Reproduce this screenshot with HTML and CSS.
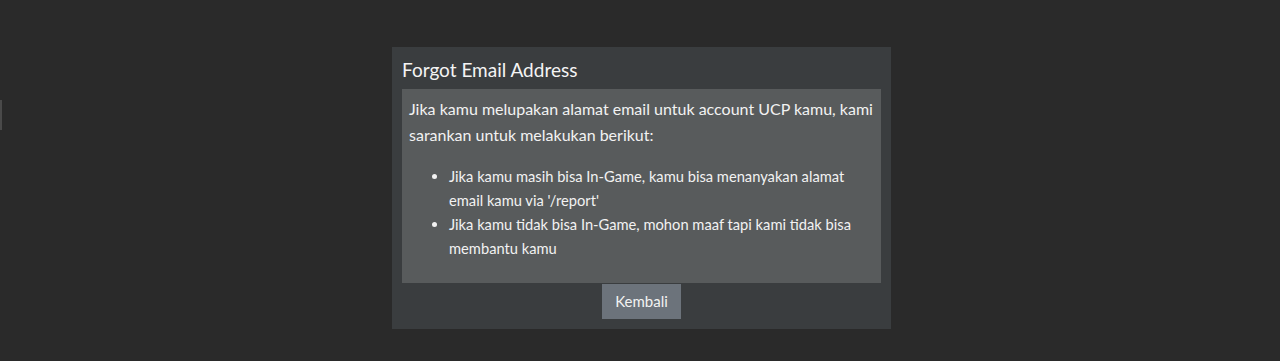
FILE: index.html
```html
<!DOCTYPE html>
<html lang="id">
<head>
<meta charset="utf-8">
<title>Forgot Email Address</title>
<link rel="stylesheet" href="styles.css">
</head>
<body>
<div class="edge"></div>
<main class="page">
  <section class="card">
    <h5 class="card-title">Forgot Email Address</h5>
    <div class="card-body">
      <p class="lead">Jika kamu melupakan alamat email untuk account UCP kamu, kami sarankan untuk melakukan berikut:</p>
      <ul class="steps">
        <li>Jika kamu masih bisa In-Game, kamu bisa menanyakan alamat email kamu via '/report'</li>
        <li>Jika kamu tidak bisa In-Game, mohon maaf tapi kami tidak bisa membantu kamu</li>
      </ul>
    </div>
    <div class="actions">
      <a class="btn" href="#">Kembali</a>
    </div>
  </section>
</main>
</body>
</html>
```
FILE: styles.css
```css
html, body {
  margin: 0;
  padding: 0;
}
body {
  background: #2a2a2a;
  color: #f2f2f2;
  font-family: Lato, "Open Sans", sans-serif;
  min-height: 361px;
}
.edge {
  position: absolute;
  left: 0;
  top: 100px;
  width: 2px;
  height: 30px;
  background: #4a4a4a;
}
.page {
  display: flex;
  justify-content: center;
  padding-top: 47px;
  padding-left: 3px;
}
.card {
  width: 479px;
  background: #3a3d3f;
  padding: 8px 10px 10px;
  display: flex;
  flex-direction: column;
}
.card-title {
  margin: 0;
  font-size: 19px;
  font-weight: 400;
  line-height: 30px;
  color: #f4f4f4;
  height: 34px;
}
.card-body {
  background: #585b5c;
  padding: 7px;
}
.lead {
  margin: 0 0 16px;
  font-size: 16px;
  line-height: 26px;
}
.steps {
  margin: 0 0 16px;
  padding-left: 40px;
  font-size: 14.7px;
  line-height: 24px;
}
.actions {
  display: flex;
  justify-content: center;
  padding-top: 1px;
}
.btn {
  display: inline-block;
  background: #6c737b;
  color: #f2f2f2;
  text-decoration: none;
  font-size: 15px;
  line-height: 21px;
  padding: 6px 12px;
  border: 1px solid #6c737b;
}
```
